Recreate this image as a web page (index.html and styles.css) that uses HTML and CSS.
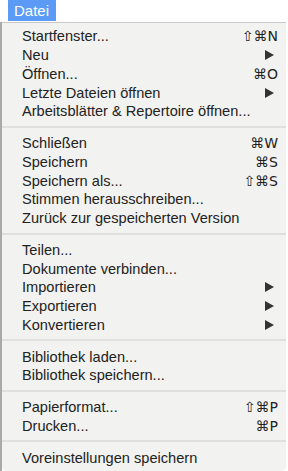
FILE: index.html
```html
<!DOCTYPE html>
<html lang="de">

<head>
  <meta charset="UTF-8">
  <title>Datei</title>
  <link rel="stylesheet" href="styles.css">
</head>

<body>
  <div class="menubar">
    <div class="menubar-title">Datei</div>
  </div>

  <div class="menu-wrap">
    <ul class="menu">
      <li class="menu-item"><span>Startfenster...</span><span class="key">⇧⌘N</span></li>
      <li class="menu-item"><span>Neu</span><span class="arrow"></span></li>
      <li class="menu-item"><span>Öffnen...</span><span class="key">⌘O</span></li>
      <li class="menu-item"><span>Letzte Dateien öffnen</span><span class="arrow"></span></li>
      <li class="menu-item"><span>Arbeitsblätter &amp; Repertoire öffnen...</span></li>
      <li class="menu-sep"></li>
      <li class="menu-item"><span>Schließen</span><span class="key">⌘W</span></li>
      <li class="menu-item"><span>Speichern</span><span class="key">⌘S</span></li>
      <li class="menu-item"><span>Speichern als...</span><span class="key">⇧⌘S</span></li>
      <li class="menu-item"><span>Stimmen herausschreiben...</span></li>
      <li class="menu-item"><span>Zurück zur gespeicherten Version</span></li>
      <li class="menu-sep"></li>
      <li class="menu-item"><span>Teilen...</span></li>
      <li class="menu-item"><span>Dokumente verbinden...</span></li>
      <li class="menu-item"><span>Importieren</span><span class="arrow"></span></li>
      <li class="menu-item"><span>Exportieren</span><span class="arrow"></span></li>
      <li class="menu-item"><span>Konvertieren</span><span class="arrow"></span></li>
      <li class="menu-sep"></li>
      <li class="menu-item"><span>Bibliothek laden...</span></li>
      <li class="menu-item"><span>Bibliothek speichern...</span></li>
      <li class="menu-sep"></li>
      <li class="menu-item"><span>Papierformat...</span><span class="key">⇧⌘P</span></li>
      <li class="menu-item"><span>Drucken...</span><span class="key">⌘P</span></li>
      <li class="menu-sep"></li>
      <li class="menu-item"><span>Voreinstellungen speichern</span></li>
    </ul>
  </div>
</body>

</html>
```

FILE: styles.css
```css
body {
  margin: 0;
  background-color: #fff;
  font-family: "Liberation Sans", Arial, sans-serif;
  font-size: 14.6px;
  color: #222;
}

.menubar {
  height: 22px;
  padding-left: 8px;
}

.menubar-title {
  display: inline-block;
  height: 21px;
  padding: 0 7px 0 6px;
  line-height: 21px;
  font-size: 15px;
  color: #fff;
  background-color: #5b9bf5;
}

.menu-wrap {
  padding-left: 2px;
  background: linear-gradient(to right, #a9a9a9 2px, #fff 2px);
  width: 284px;
}

.menu {
  margin: 0;
  padding: 4px 0;
  list-style: none;
  border-top: 1px solid #c9c9c9;
  border-radius: 0 0 5px 5px;
  background-color: #f2f2f0;
}

.menu-item {
  display: flex;
  justify-content: space-between;
  align-items: center;
  height: 18.75px;
  padding: 0 8px 0 20px;
}

.key {
  font-family: "DejaVu Sans", "Liberation Sans", sans-serif;
  font-size: 14px;
}

.arrow {
  width: 0;
  height: 0;
  margin-right: 4px;
  border-top: 5px solid transparent;
  border-bottom: 5px solid transparent;
  border-left: 9px solid #333;
}

.menu-sep {
  height: 2px;
  margin: 5px 0 6px;
  background-color: #e0e0de;
}
```
